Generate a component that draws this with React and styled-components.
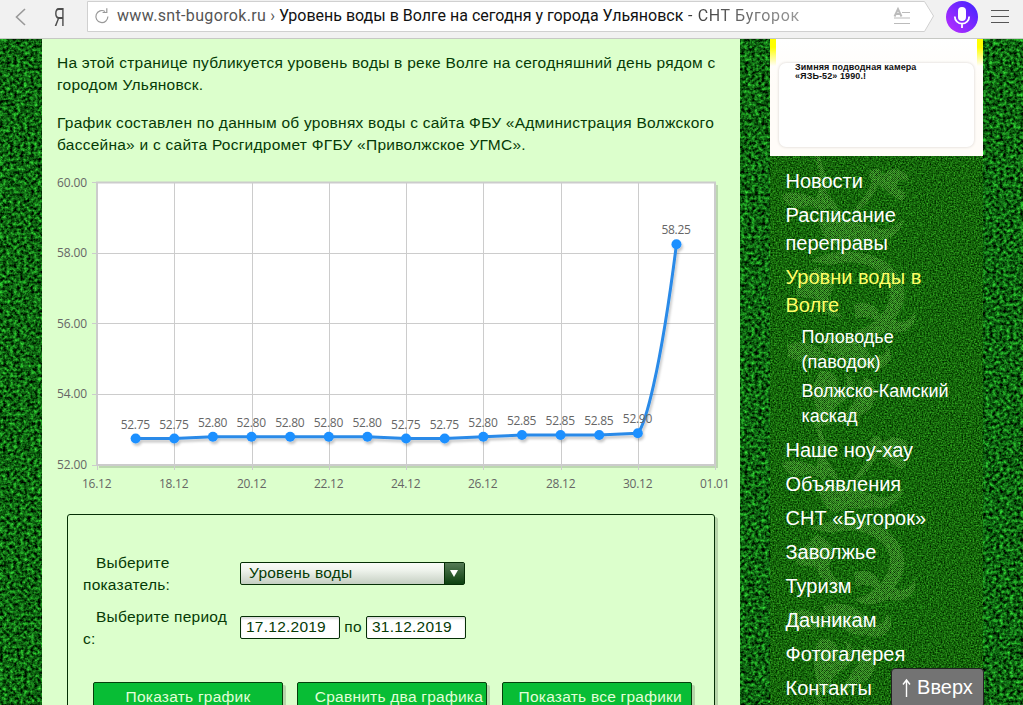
import React from 'react';
import styled, { createGlobalStyle, css } from 'styled-components';

const GlobalStyle = createGlobalStyle`
  * {
    box-sizing: border-box;
  }
  html, body {
    margin: 0;
    padding: 0;
    overflow: hidden;
  }
  body {
    font-family: "Liberation Sans", Arial, sans-serif;
  }
`;

const Window = styled.div`
  width: 1023px;
  height: 705px;
  display: flex;
  flex-direction: column;
  overflow: hidden;
  position: relative;
`;

/* ---------- browser bar ---------- */

const BrowserBar = styled.header`
  height: 39px;
  flex: none;
  display: flex;
  align-items: flex-start;
  background: #f1f1f1;
  border-bottom: 1px solid #c6c8c4;
`;

const BarIcon = styled.svg`
  flex: none;
  display: block;
`;

const YandexMark = styled.div`
  width: 47px;
  height: 34px;
  padding-left: 14px;
  font: 25px/35px "Liberation Sans", Arial, sans-serif;
  color: #4c4c4c;

  span {
    display: inline-block;
    transform: scaleX(0.6);
    transform-origin: 0 50%;
  }
`;

const AddressBar = styled.div`
  position: relative;
  width: 847px;
  height: 32px;
`;

const AddressShape = styled.svg`
  position: absolute;
  inset: 0;
`;

const AddressText = styled.div`
  position: relative;
  display: flex;
  align-items: center;
  height: 31px;
  padding-left: 7px;
  font-family: Roboto, sans-serif;
  font-size: 16px;
  color: #555;
  white-space: pre;
`;

const Host = styled.span`
  margin-left: 7px;
  letter-spacing: 0.35px;
`;

const PageName = styled.span`
  color: #111;
`;

const SiteName = styled.span`
  background: linear-gradient(90deg, #333, #999);
  background-clip: text;
  color: transparent;
  letter-spacing: 0.65px;
`;

/* ---------- page ---------- */

const Page = styled.div`
  position: relative;
  flex: 1;
  min-height: 0;
  display: flex;
  padding-left: 42px;
  background: #0d5c12;
`;

const Grass = styled.svg`
  position: absolute;
  top: 0;
  left: 0;
`;

const Content = styled.main`
  position: relative;
  width: 698px;
  height: 680px;
  padding: 13px 15px 0;
  background: #dcffcc;
`;

const Paragraph = styled.p`
  margin: 0 0 16px;
  font-size: 15.5px;
  line-height: 22px;
  letter-spacing: 0.25px;
  color: #063b06;
  white-space: nowrap;
`;

const Chart = styled.svg`
  display: block;
  margin: -2px -15px 0;
  font-family: "Open Sans", sans-serif;
  font-size: 12px;
  fill: #666;
`;

const FormBox = styled.form`
  width: 648px;
  height: 260px;
  margin: 14px 0 0 10px;
  padding: 37px 15px 0;
  border: 1px solid #052f05;
  border-radius: 3px;
  box-shadow: 3px 3px 0 #b7d5aa;
  color: #063b06;
  font-size: 15.5px;
  letter-spacing: 0.24px;
`;

const FormRow = styled.div`
  display: flex;
  align-items: center;
  height: 44px;
  margin-bottom: 10px;
`;

const Label = styled.label`
  width: 157px;
  line-height: 22px;
  text-indent: 13px;
  white-space: pre-line;
`;

const Select = styled.div`
  display: flex;
  justify-content: space-between;
  width: 225px;
  height: 23px;
  margin-bottom: 2px;
  border: 1px solid #052f05;
  border-radius: 2px;
  background: linear-gradient(#fafcf9, #eef3ec 35%, #c5cfc2);
  padding-left: 8px;
  line-height: 20px;
`;

const Arrow = styled.span`
  width: 20px;
  display: flex;
  align-items: center;
  justify-content: center;
  padding-right: 2px;
  border-left: 1px solid #052f05;
  background: linear-gradient(#557b55, #0c400f);
`;

const DateField = styled.div`
  width: 100px;
  height: 23px;
  margin-bottom: 2px;
  padding-left: 5px;
  border: 1px solid #052f05;
  border-radius: 2px;
  background: #fff;
  box-shadow: inset 0 2px 2px #ddd;
  line-height: 20px;
`;

const Between = styled.span`
  width: 26px;
  padding-bottom: 3px;
  text-align: center;
`;

const Buttons = styled.div`
  display: flex;
  gap: 14.4px;
  margin: 32px 0 0 10px;
`;

const Button = styled.div`
  width: 190px;
  height: 31px;
  flex: none;
  border: 1px solid #063f0b;
  border-radius: 2px;
  background: #08bd35;
  box-shadow: 3px 3px 0 #b7d5aa;
  color: #e3ffd9;
  line-height: 28px;
  text-align: center;
  white-space: nowrap;
  padding-left: ${({ $shift }) => $shift || 0}px;
`;

/* ---------- sidebar ---------- */

const Sidebar = styled.aside`
  position: relative;
  width: 213px;
  margin-left: 30px;
`;

const AdFrame = styled.div`
  height: 117px;
  padding: 24px 9px 0;
  background:
    linear-gradient(#ff0 0, #ff0 30%, rgba(255, 255, 0, 0)) 0 0 / 6px 27px no-repeat,
    linear-gradient(#ff0 0, #ff0 30%, rgba(255, 255, 0, 0)) 100% 0 / 6px 27px no-repeat,
    linear-gradient(#fff, #fffcf8 40%, #fffcf8);
`;

const AdCard = styled.div`
  height: 84px;
  padding-left: 16px;
  border-radius: 7px;
  background: #fff;
  box-shadow: 0 0 3px #d5d0cb;
  color: #111;
  font-size: 9px;
  font-weight: bold;
  line-height: 9px;
  letter-spacing: 0.1px;
  white-space: pre-line;
`;

const Menu = styled.nav`
  padding: 11px 0 0 15.5px;
`;

const MenuItem = styled.div`
  margin-bottom: 6px;
  font-size: 20px;
  line-height: 28px;
  white-space: pre-line;
  color: ${({ $active }) => ($active ? '#ffff66' : '#fff')};

  ${({ $sub }) =>
    $sub &&
    css`
      margin: 0 0 4px 16px;
      font-size: 18px;
      line-height: 25px;
    `}
`;

const SubMenu = styled.div`
  padding-bottom: 3px;
`;

const UpButton = styled.div`
  position: absolute;
  right: 39px;
  bottom: -3px;
  width: 93px;
  height: 40px;
  border: 1px solid #222;
  border-radius: 4px;
  background: #737373;
  color: #fff;
  font-size: 20px;
  line-height: 37px;
  display: flex;
  align-items: center;
  justify-content: center;
  gap: 6px;
  padding-bottom: 1px;
`;

const levels = [
  52.75, 52.75, 52.8, 52.8, 52.8, 52.8, 52.8, 52.75, 52.75, 52.8, 52.85, 52.85, 52.85, 52.9, 58.25,
];
const dates = ['16.12', '18.12', '20.12', '22.12', '24.12', '26.12', '28.12', '30.12', '01.01'];
const scale = [60, 58, 56, 54, 52];

// chart plot area inside the 698x330 drawing
const left = 55;
const top = 12.5;
const bottom = 295;
const stepX = 38.63;
const toX = (i) => left + (i + 1) * stepX;
const toY = (v) => bottom - ((v - 52) * (bottom - top)) / 8;

const points = levels.map((v, i) => ({ x: toX(i), y: toY(v), v }));
const flat = points.slice(0, -1);
const line =
  'M' +
  flat.map((p) => `${p.x} ${p.y}`).join(' L') +
  ` C603 255 618 205 ${points[14].x} ${points[14].y}`;

const menu = [
  { text: 'Новости' },
  { text: 'Расписание\nпереправы' },
  { text: 'Уровни воды в\nВолге', active: true, sub: ['Половодье\n(паводок)', 'Волжско-Камский\nкаскад'] },
  { text: 'Наше ноу-хау' },
  { text: 'Объявления' },
  { text: 'СНТ «Бугорок»' },
  { text: 'Заволжье' },
  { text: 'Туризм' },
  { text: 'Дачникам' },
  { text: 'Фотогалерея' },
  { text: 'Контакты' },
];

const GrassBackground = () => (
  <Grass width="1023" height="666">
    <defs>
      <filter id="blades" x="0" y="0" width="100%" height="100%" colorInterpolationFilters="sRGB">
        <feTurbulence type="fractalNoise" baseFrequency="0.29 0.31" numOctaves="3" seed="8" />
        <feColorMatrix
          values="0.4 0 0 0 -0.14
                  1.35 0.15 0 0 -0.36
                  0.4 0 0 0 -0.13
                  0 0 0 0 1"
        />
      </filter>
      <filter id="soft" x="0" y="0" width="100%" height="100%" colorInterpolationFilters="sRGB">
        <feTurbulence type="fractalNoise" baseFrequency="0.63 0.67" numOctaves="2" seed="3" />
        <feColorMatrix
          values="0.35 0 0 0 -0.09
                  0.8 0 0 0 0
                  0.25 0 0 0 -0.08
                  0 0 0 0 1"
        />
      </filter>
      <pattern id="dots" width="2" height="2" patternUnits="userSpaceOnUse">
        <rect width="1" height="1" fill="#8fd468" />
        <rect x="1" y="1" width="1" height="1" fill="#8fd468" />
      </pattern>
      {/* damask ornament, repeated down the column */}
      <g id="flower" fill="url(#dots)">
        <path d="M50 0 C52 14 60 22 56 36 C62 46 70 50 68 62 C64 52 54 48 54 62 C50 50 46 56 40 50 C28 56 14 52 12 40 C24 34 38 40 46 44 C52 28 50 14 44 0 Z" />
        <path d="M122 14 C132 14 140 20 138 26 C130 22 126 26 128 34 C136 36 138 42 132 46 C122 42 116 34 108 30 C102 44 92 56 82 58 C90 46 100 36 102 26 C96 20 100 12 110 14 L112 20 Z" />
        <path d="M48 66 C64 58 84 66 106 72 C116 78 126 70 134 64 C130 80 118 88 104 84 C92 88 80 82 70 88 C60 92 54 84 48 66 Z" />
        <path d="M40 106 C64 92 104 94 122 112 C138 128 138 150 124 164 C132 172 144 162 144 156 C150 170 134 182 118 176 C104 184 92 182 84 176 C106 172 122 152 120 134 C114 112 86 102 62 110 Z" />
        <path d="M46 112 C60 116 70 130 58 142 C62 152 66 158 74 162 C62 164 50 158 46 144 C36 142 26 144 26 138 C26 126 38 124 46 112 Z" />
        <path d="M84 150 C100 142 114 156 110 170 C104 162 94 160 86 164 Z M54 184 C70 176 88 184 98 196 C102 208 118 200 116 190 C130 204 112 220 96 212 C78 216 66 196 54 196 Z" />
        <path d="M18 190 C34 182 50 192 58 202 C48 206 34 210 18 202 Z M50 216 C64 214 72 226 66 236 C76 238 80 226 74 218 C88 222 86 242 70 248 C60 256 58 266 62 270 L50 270 C46 250 38 234 50 216 Z" />
        <path d="M94 222 C106 226 110 240 100 254 C94 262 80 260 72 270 C74 254 92 244 94 222 Z" />
      </g>
    </defs>
    <rect width="1023" height="666" filter="url(#blades)" />
    <rect x="770" y="117" width="213" height="549" filter="url(#soft)" />
    <svg x="770" y="117" width="213" height="549" opacity="0.42">
      <use href="#flower" y="-1" />
      <use href="#flower" y="267" />
      <use href="#flower" y="535" />
    </svg>
  </Grass>
);

const LevelChart = () => (
  <Chart width="698" height="330">
    <defs>
      <filter id="shadow" x="-10%" y="-10%" width="120%" height="120%">
        <feDropShadow dx="1.5" dy="2.5" stdDeviation="0.8" floodColor="#000" floodOpacity="0.22" />
      </filter>
    </defs>
    <path d="M675 15 V297 H57" fill="none" stroke="#bcd8b0" strokeWidth="2" />
    <rect x={left} y={top} width="618" height={bottom - top} fill="#fff" stroke="#ccc" strokeWidth="2" />
    {scale.map((v) => (
      <React.Fragment key={v}>
        <path d={`M50 ${Math.floor(toY(v) + 0.2) + 0.5} H673`} stroke="#ccc" />
        <text x="15" y={toY(v) + 4} textLength="30">
          {v.toFixed(2)}
        </text>
      </React.Fragment>
    ))}
    {dates.map((d, i) => {
      const x = Math.floor(left + i * stepX * 2 + 0.5) + 0.5;
      return (
        <React.Fragment key={d}>
          <path d={`M${x} 13 V300`} stroke="#ccc" />
          <text x={x - 15.5} y="318" textLength="29.5">
            {d}
          </text>
        </React.Fragment>
      );
    })}
    <g filter="url(#shadow)">
      <path d={line} fill="none" stroke="#298ae8" strokeWidth="3" strokeLinejoin="round" />
      {points.map((p) => (
        <circle key={p.x} cx={p.x} cy={p.y} r="5" fill="#1e90ff" />
      ))}
    </g>
    {points.map((p) => (
      <text key={p.x} x={p.x - 15} y={p.y - 10} textLength="29.5">
        {p.v.toFixed(2)}
      </text>
    ))}
  </Chart>
);

const TopBar = () => (
  <BrowserBar>
    <BarIcon width="40" height="34" fill="none" stroke="#999" strokeWidth="1.6">
      <path d="M25 9 L16.5 17 L25 25" />
    </BarIcon>
    <YandexMark>
      <span>Я</span>
    </YandexMark>
    <AddressBar>
      <AddressShape width="847" height="32">
        <path d="M0.5 1.5 H837.5 L846.5 16 L837.5 31.5 H0.5 Z" fill="#fff" stroke="#d0d0d0" />
      </AddressShape>
      <AddressText>
        <BarIcon width="16" height="16" viewBox="0 0 16 16" fill="none" stroke="#999" strokeWidth="1.2">
          <path d="M11 3.4 A6 6 0 1 0 13.9 8.6 M8.6 4.5 H12.8 V0.3" />
        </BarIcon>
        <Host>www.snt-bugorok.ru</Host>
        <span> › </span>
        <PageName>Уровень воды в Волге на сегодня у города Ульяновск</PageName>
        <SiteName> - СНТ Бугорок</SiteName>
      </AddressText>
      <AddressShape width="847" height="32" fill="none" stroke="#bbb">
        <path d="M807.5 16.5 L811 9 L814.5 16.5 M809 14 H813" strokeWidth="2" />
        <path d="M815 12.5 H823 M807 18 H823 M807 23.5 H823" strokeWidth="1.2" />
      </AddressShape>
    </AddressBar>
    <BarIcon width="89" height="36">
      <defs>
        <linearGradient id="voice" x1="0" y1="1" x2="1" y2="0">
          <stop offset="0.1" stopColor="#b22cff" />
          <stop offset="0.9" stopColor="#4a24ff" />
        </linearGradient>
      </defs>
      <circle cx="28" cy="17" r="16" fill="url(#voice)" />
      <rect x="24" y="7" width="8" height="14" rx="4" fill="#fff" />
      <path d="M20.8 16.5 A7.2 7.2 0 0 0 35.2 16.5 M28 24 V28" fill="none" stroke="#fff" strokeWidth="1.8" />
      <path d="M57 10.5 H75 M57 16.5 H75 M57 22.5 H75" stroke="#555" />
    </BarIcon>
  </BrowserBar>
);

const App = () => {
  return (
    <Window>
      <GlobalStyle />
      <TopBar />
      <Page>
        <GrassBackground />
        <Content>
          <Paragraph>
            На этой странице публикуется уровень воды в реке Волге на сегодняшний день рядом с
            <br />
            городом Ульяновск.
          </Paragraph>
          <Paragraph>
            График составлен по данным об уровнях воды с сайта ФБУ «Администрация Волжского
            <br />
            бассейна» и с сайта Росгидромет ФГБУ «Приволжское УГМС».
          </Paragraph>
          <LevelChart />
          <FormBox>
            <FormRow>
              <Label>{'Выберите\nпоказатель:'}</Label>
              <Select>
                Уровень воды
                <Arrow>
                  <svg width="8" height="7">
                    <path d="M0 0 H8 L4 7 Z" fill="#fff" />
                  </svg>
                </Arrow>
              </Select>
            </FormRow>
            <FormRow>
              <Label>{'Выберите период\nс:'}</Label>
              <DateField>17.12.2019</DateField>
              <Between>по</Between>
              <DateField>31.12.2019</DateField>
            </FormRow>
            <Buttons>
              <Button>Показать график</Button>
              <Button $shift={13}>Сравнить два графика</Button>
              <Button $shift={7}>Показать все графики</Button>
            </Buttons>
          </FormBox>
        </Content>
        <Sidebar>
          <AdFrame>
            <AdCard>{'Зимняя подводная камера\n«ЯЗЬ-52» 1990.!'}</AdCard>
          </AdFrame>
          <Menu>
            {menu.map((item) => (
              <React.Fragment key={item.text}>
                <MenuItem $active={item.active}>{item.text}</MenuItem>
                {item.sub && (
                  <SubMenu>
                    {item.sub.map((sub) => (
                      <MenuItem key={sub} $sub>
                        {sub}
                      </MenuItem>
                    ))}
                  </SubMenu>
                )}
              </React.Fragment>
            ))}
          </Menu>
        </Sidebar>
        <UpButton>
          <svg width="9" height="20" fill="none" stroke="#fff" strokeWidth="1.4">
            <path d="M4.5 19 V2 M1 6.5 L4.5 2 L8 6.5" />
          </svg>
          Вверх
        </UpButton>
      </Page>
    </Window>
  );
};

export default App;
